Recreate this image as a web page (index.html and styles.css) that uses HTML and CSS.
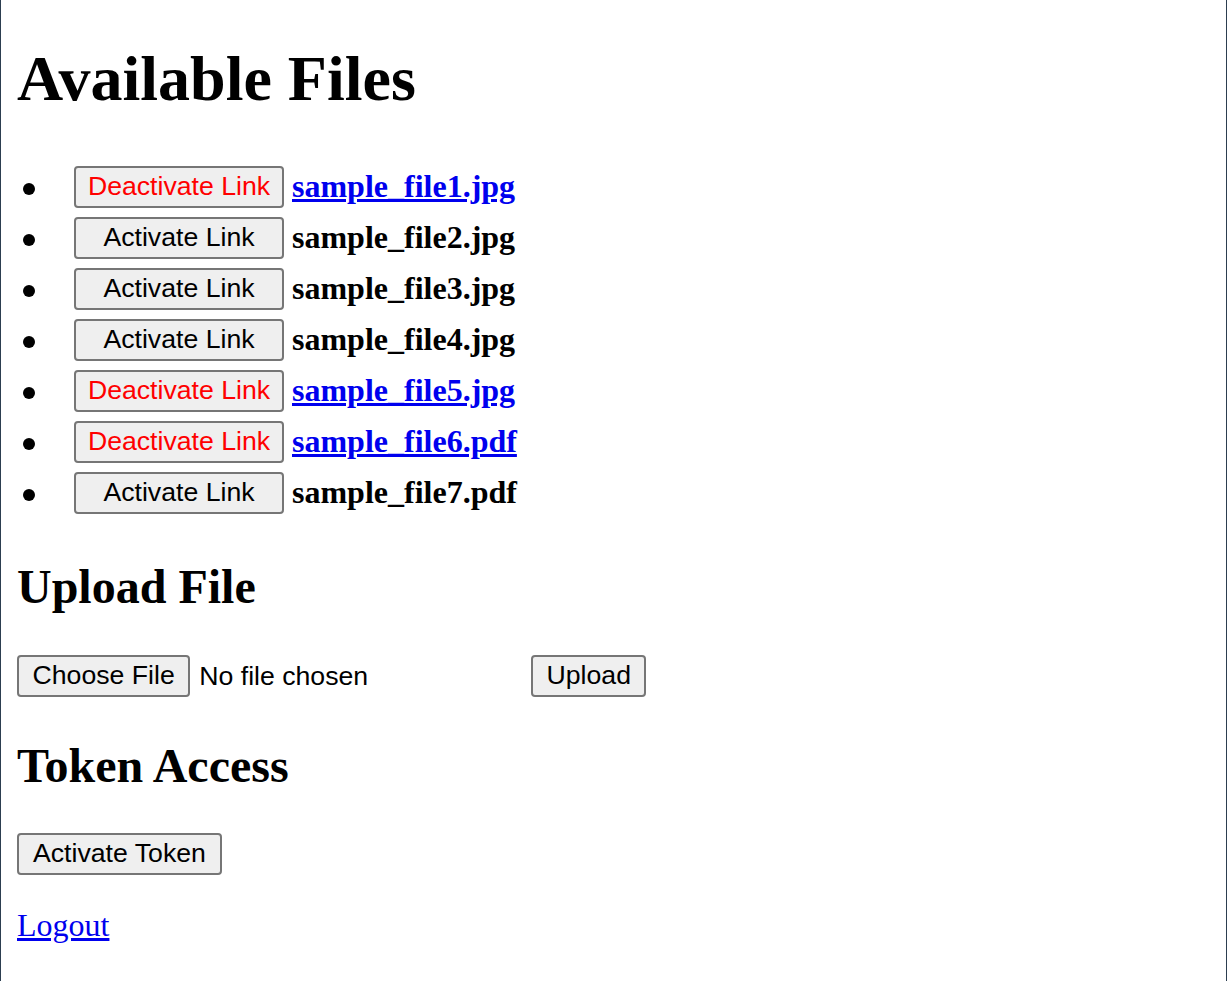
FILE: index.html
```html
<!DOCTYPE html>
<html lang="en">
<head>
<meta charset="utf-8">
<title>Available Files</title>
<link rel="stylesheet" href="styles.css">
</head>
<body>
<h1 class="page-title">Available Files</h1>
<ul class="file-list">
  <li class="file-row"><button class="btn btn-list btn-deactivate">Deactivate Link</button><a class="file-name file-link" href="#">sample_file1.jpg</a></li>
  <li class="file-row"><button class="btn btn-list">Activate Link</button><span class="file-name">sample_file2.jpg</span></li>
  <li class="file-row"><button class="btn btn-list">Activate Link</button><span class="file-name">sample_file3.jpg</span></li>
  <li class="file-row"><button class="btn btn-list">Activate Link</button><span class="file-name">sample_file4.jpg</span></li>
  <li class="file-row"><button class="btn btn-list btn-deactivate">Deactivate Link</button><a class="file-name file-link" href="#">sample_file5.jpg</a></li>
  <li class="file-row"><button class="btn btn-list btn-deactivate">Deactivate Link</button><a class="file-name file-link" href="#">sample_file6.pdf</a></li>
  <li class="file-row"><button class="btn btn-list">Activate Link</button><span class="file-name">sample_file7.pdf</span></li>
</ul>
<h2 class="section-title upload-title">Upload File</h2>
<form class="upload-row">
  <input type="file" class="file-input">
  <button type="button" class="btn btn-upload">Upload</button>
</form>
<h2 class="section-title token-title">Token Access</h2>
<button class="btn btn-token">Activate Token</button>
<p class="logout"><a href="#" class="logout-link">Logout</a></p>
</body>
</html>
```

FILE: styles.css
```css
html {
  box-sizing: border-box;
  min-height: 100vh;
  border-left: 1px solid #2c3e50;
  border-right: 1px solid #2c3e50;
  background: #fff;
}

body {
  margin: 0;
  padding: 42px 16px 0;
  font-family: "Liberation Serif", "Times New Roman", serif;
  font-size: 32px;
  color: #000;
}

.page-title {
  margin: 0 0 49.5px;
  font-size: 64px;
  font-weight: bold;
  line-height: normal;
}

.file-list {
  margin: 0;
  padding: 0;
  list-style: none;
}

.file-row {
  display: flex;
  align-items: center;
  height: 42px;
  margin-bottom: 9px;
}

.file-row:last-child {
  margin-bottom: 0;
}

.file-row::before {
  content: "";
  flex: none;
  width: 12px;
  height: 12px;
  margin: 4px 39.5px 0 5.5px;
  border-radius: 50%;
  background: #000;
}

.btn {
  box-sizing: border-box;
  height: 42px;
  padding: 0 12px;
  border: 2px solid #767676;
  border-radius: 4px;
  background: #efefef;
  color: #000;
  font-family: "Liberation Sans", Arial, sans-serif;
  font-size: 26.67px;
  line-height: normal;
  cursor: pointer;
}

.btn-list {
  flex: none;
  width: 210px;
  margin-right: 8px;
  padding: 0;
  text-align: center;
}

.btn-deactivate {
  color: #ff0000;
}

.file-name {
  font-weight: bold;
  line-height: normal;
  color: #000;
}

.file-link {
  color: #0000ee;
  text-decoration: underline;
}

.section-title {
  font-size: 48px;
  font-weight: bold;
  line-height: normal;
  margin: 0;
}

.upload-title {
  margin-top: 45px;
}

.upload-row {
  display: flex;
  align-items: center;
  gap: 9px;
  height: 42px;
  margin: 41px 0 0;
}

.file-input {
  width: 505px;
  height: 42px;
  font-family: "Liberation Sans", Arial, sans-serif;
  font-size: 26.67px;
  color: #000;
}

.file-input::file-selector-button {
  box-sizing: border-box;
  height: 42px;
  margin-right: 9px;
  padding: 0 13.5px;
  border: 2px solid #767676;
  border-radius: 4px;
  background: #efefef;
  color: #000;
  font: inherit;
}

.btn-upload {
  padding: 0 13.5px;
}

.token-title {
  margin-top: 41.5px;
}

.btn-token {
  display: block;
  margin-top: 39.5px;
  padding: 0 14px;
}

.logout {
  margin: 32px 0 0;
  line-height: normal;
}

.logout-link {
  color: #0000ee;
  text-decoration: underline;
}
```
